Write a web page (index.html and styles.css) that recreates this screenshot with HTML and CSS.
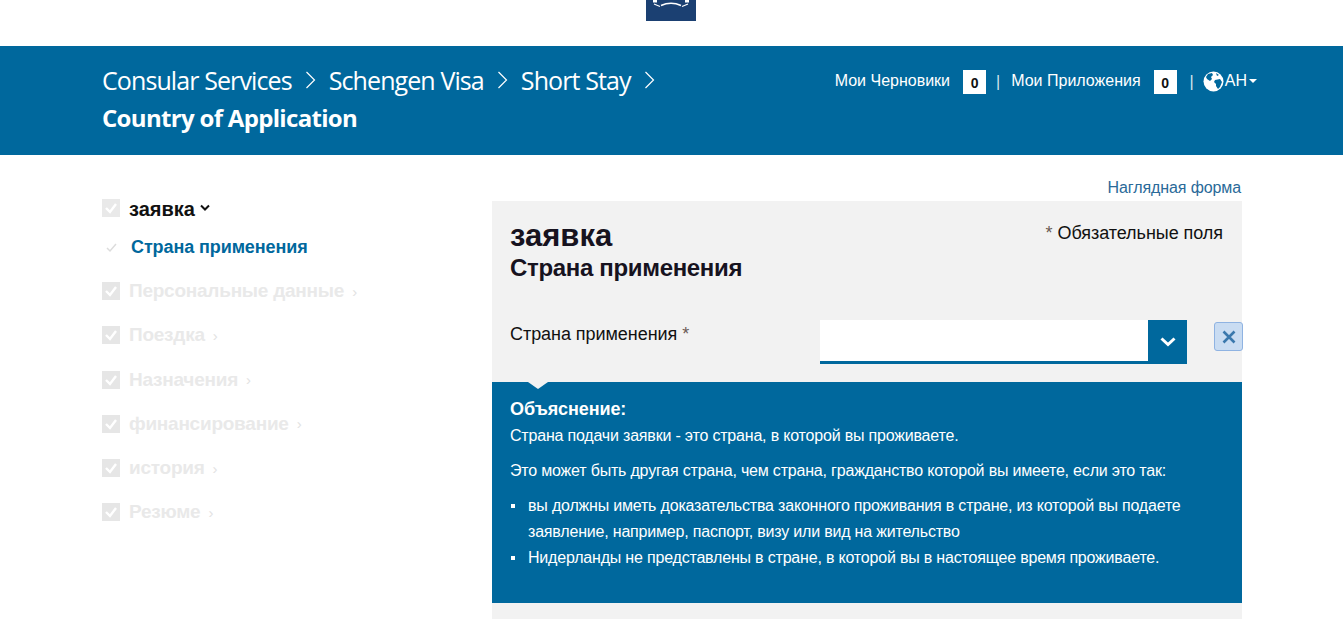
FILE: index.html
```html
<!DOCTYPE html>
<html lang="ru">
<head>
  <meta charset="UTF-8" />
  <title>Country of Application</title>
  <link rel="stylesheet" href="styles.css">
</head>
<body>
  <div class="top">
    <div class="logo">
      <svg width="50" height="21" viewBox="0 0 50 21">
        <rect width="50" height="21" fill="#1b4072"/>
        <path d="M15 5.500 Q25 1 35 5.500" fill="none" stroke="#fff" stroke-width="1.600"/>
        <path d="M8 4l6 2.500M42 4l-6 2.500" stroke="#fff" stroke-width="1.200"/>
        <path d="M7 0h4v2.500h-4zM39 0h4v2.500h-4z" fill="#fff"/>
      </svg>
    </div>
  </div>

  <div class="header">
    <div class="crumbs">
      <div class="crumb-line">
        <span>Consular Services</span>
        <svg class="sep" width="11" height="18" viewBox="0 0 11 18"><path d="M1.500 1l8 8-8 8" fill="none" stroke="#fff" stroke-width="1.200"/></svg>
        <span>Schengen Visa</span>
        <svg class="sep" width="11" height="18" viewBox="0 0 11 18"><path d="M1.500 1l8 8-8 8" fill="none" stroke="#fff" stroke-width="1.200"/></svg>
        <span>Short Stay</span>
        <svg class="sep" width="11" height="18" viewBox="0 0 11 18"><path d="M1.500 1l8 8-8 8" fill="none" stroke="#fff" stroke-width="1.200"/></svg>
      </div>
      <div class="crumb-current">Country of Application</div>
    </div>
    <div class="usernav">
      <span>Мои Черновики</span><span class="count">0</span><span class="bar">|</span>
      <span>Мои Приложения</span><span class="count">0</span><span class="bar bar-last">|</span>
      <svg class="globe" width="21" height="21" viewBox="0 0 21 21">
        <circle cx="10.500" cy="10.500" r="10" fill="#fff"/>
        <path d="M5 3l4-1 1 2-2 2 1 2-2 2-3-2-1-2zM12 9l5-1 2 3-2 5-2 2-2-3v-2l-2-2zM13 2l3 2-2 1z" fill="#00689d"/>
      </svg>
      <span class="lang">АН</span><span class="caret"></span>
    </div>
  </div>

  <div class="main">
    <div class="steps">
      <div class="step step-open"><span class="box"><svg width="18" height="18" viewBox="0 0 18 18"><path d="M4 9l4 4 6-8" fill="none" stroke="#fff" stroke-width="2.400"/></svg></span><span class="step-name">заявка</span>
        <svg class="chev" width="10" height="8" viewBox="0 0 10 8"><path d="M1 1.500l4 4 4-4" fill="none" stroke="#111" stroke-width="2"/></svg>
      </div>
      <div class="substep"><svg width="13" height="11" viewBox="0 0 13 11"><path d="M2 6l3 3 6-7" fill="none" stroke="#dcdcdc" stroke-width="1.500"/></svg>Страна применения</div>
      <div class="step"><span class="box"><svg width="18" height="18" viewBox="0 0 18 18"><path d="M4 9l4 4 6-8" fill="none" stroke="#fff" stroke-width="2.400"/></svg></span>Персональные данные<span class="more">›</span></div>
      <div class="step"><span class="box"><svg width="18" height="18" viewBox="0 0 18 18"><path d="M4 9l4 4 6-8" fill="none" stroke="#fff" stroke-width="2.400"/></svg></span>Поездка<span class="more">›</span></div>
      <div class="step"><span class="box"><svg width="18" height="18" viewBox="0 0 18 18"><path d="M4 9l4 4 6-8" fill="none" stroke="#fff" stroke-width="2.400"/></svg></span>Назначения<span class="more">›</span></div>
      <div class="step"><span class="box"><svg width="18" height="18" viewBox="0 0 18 18"><path d="M4 9l4 4 6-8" fill="none" stroke="#fff" stroke-width="2.400"/></svg></span>финансирование<span class="more">›</span></div>
      <div class="step"><span class="box"><svg width="18" height="18" viewBox="0 0 18 18"><path d="M4 9l4 4 6-8" fill="none" stroke="#fff" stroke-width="2.400"/></svg></span>история<span class="more">›</span></div>
      <div class="step"><span class="box"><svg width="18" height="18" viewBox="0 0 18 18"><path d="M4 9l4 4 6-8" fill="none" stroke="#fff" stroke-width="2.400"/></svg></span>Резюме<span class="more">›</span></div>
    </div>

    <div class="content">
      <div class="form-link">Наглядная форма</div>
      <div class="panel">
        <div class="panel-head">
          <div>
            <h1>заявка</h1>
            <h2>Страна применения</h2>
          </div>
          <div class="required"><span class="star">*</span> Обязательные поля</div>
        </div>
        <div class="field">
          <label>Страна применения <span class="star">*</span></label>
          <div class="select">
            <div class="select-value"></div>
            <div class="select-btn"><svg width="18" height="12" viewBox="0 0 18 12"><path d="M2.500 2.500L9 8.500l6.500-6" fill="none" stroke="#fff" stroke-width="3"/></svg></div>
          </div>
          <div class="clear"><svg width="14" height="14" viewBox="0 0 14 14"><path d="M1.500 1.500l11 11M12.500 1.500l-11 11" fill="none" stroke="#3a78ad" stroke-width="2.600"/></svg></div>
        </div>
        <div class="explain">
          <h3>Объяснение:</h3>
          <p class="first">Страна подачи заявки - это страна, в которой вы проживаете.</p>
          <p>Это может быть другая страна, чем страна, гражданство которой вы имеете, если это так:</p>
          <ul>
            <li>вы должны иметь доказательства законного проживания в стране, из которой вы подаете заявление, например, паспорт, визу или вид на жительство</li>
            <li>Нидерланды не представлены в стране, в которой вы в настоящее время проживаете.</li>
          </ul>
        </div>
      </div>
    </div>
  </div>
</body>
</html>
```

FILE: styles.css
```css
html, body { height:100%; }
body { margin:0; overflow:hidden; background:#fff; color:#111; font-family:'Liberation Sans', Arial, sans-serif; font-size:16px; }

.top { height:46px; display:flex; justify-content:center; }
.logo { width:50px; height:21px; margin-right:1px; }
.logo svg { display:block; }

.header { height:109px; background:#00689d; color:#fff; padding:0 86px 0 102px; display:flex; justify-content:space-between; align-items:flex-start; }
.crumbs { font-family:'Open Sans', sans-serif; }
.crumb-line { display:flex; align-items:center; gap:13px; margin-top:17px; height:34px; font-size:25px; letter-spacing:-.9px; white-space:nowrap; }
.sep { flex:none; }
.crumb-current { margin-top:5px; font-size:24px; line-height:32px; font-weight:700; letter-spacing:-.68px; }

.usernav { display:flex; align-items:center; margin-top:23px; font-size:16px; white-space:nowrap; }
.count { width:23px; height:24px; margin:0 10px 0 13px; background:#fff; color:#111; font-size:14px; font-weight:700; text-align:center; line-height:26px; position:relative; top:1px; }
.bar { margin-right:11px; font-size:16px; position:relative; top:1px; color:#d6e6ef; }
.bar-last { margin-left:3px; margin-right:9px; }
.lang { margin-left:1px; }
.caret { width:0; height:0; margin-left:2px; border-left:4px solid transparent; border-right:4px solid transparent; border-top:4px solid #fff; }

.main { display:flex; padding-left:102px; }
.steps { width:390px; padding-top:44px; }
.step { display:flex; align-items:center; height:18px; margin-bottom:26.250px; color:#e9e9e9; font-size:19px; font-weight:700; letter-spacing:-.24px; }
.box { width:18px; height:18px; margin-right:9px; background:#e6e6e6; flex:none; }
.box svg { display:block; }
.more { margin-left:8px; font-size:15px; font-weight:400; color:#e2e2e2; }
.step-open { color:#111; margin-bottom:20px; font-size:20px; letter-spacing:0; }
.step-open .box { background:#e9e9e9; }
.step-name { position:relative; top:1px; }
.chev { margin-left:5px; }
.substep { display:flex; align-items:center; height:18px; margin-bottom:26px; margin-left:2px; padding-top:1px; color:#00689d; font-size:18px; font-weight:700; letter-spacing:-.1px; }
.substep svg { margin-right:13px; margin-left:1px; }

.content { width:750px; }
.form-link { height:46px; padding-top:24px; box-sizing:border-box; text-align:right; color:#2a6a99; font-size:16px; letter-spacing:-.1px; line-height:17px; padding-right:1px; }
.panel { background:#f2f2f2; height:418px; }
.panel-head { display:flex; justify-content:space-between; padding:18px 19px 0 18px; height:101px; box-sizing:border-box; }
.panel-head h1 { margin:0; font-size:31px; line-height:34px; font-weight:700; color:#17131f; }
.panel-head h2 { margin:0; font-size:24px; line-height:30px; font-weight:700; letter-spacing:-.33px; color:#17131f; }
.required { font-size:18px; letter-spacing:-.05px; line-height:20px; padding-top:4px; }
.star { color:#6b5a55; }
.field { display:flex; align-items:flex-start; height:80px; padding-left:18px; padding-top:18px; box-sizing:border-box; }
.field label { width:310px; flex:none; font-size:18px; letter-spacing:-.05px; line-height:28px; }
.select { display:flex; width:367px; height:44px; flex:none; }
.select-value { flex:1; background:#fff; border-bottom:3px solid #00689d; }
.select-btn { width:39px; background:#00689d; display:flex; align-items:center; justify-content:center; }
.clear { width:27px; height:27px; flex:none; margin-left:27px; margin-top:2px; background:#c9dcf2; border:1px solid #8fb3e2; border-radius:3px; display:flex; align-items:center; justify-content:center; }

.explain { position:relative; background:#00689d; color:#fff; height:221px; padding:17px 18px 0; box-sizing:border-box; font-size:16px; letter-spacing:-.19px; }
.explain::before { content:""; position:absolute; top:0; left:36px; border-left:10px solid transparent; border-right:10px solid transparent; border-top:7px solid #f2f2f2; }
.explain h3 { margin:0; font-size:18px; letter-spacing:-.1px; line-height:20px; font-weight:700; }
.explain p { margin:0; line-height:26px; margin-top:9px; }
.explain p.first { margin-top:4px; }
.explain ul { list-style:none; margin:9px 0 0; padding:0 0 0 18px; }
.explain li { position:relative; line-height:26px; }
.explain li::before { content:""; position:absolute; left:-17px; top:11px; width:4px; height:4px; background:#fff; }
```
